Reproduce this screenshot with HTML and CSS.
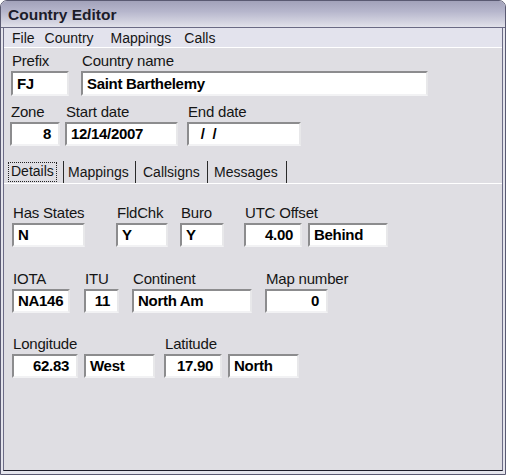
FILE: index.html
```html
<!DOCTYPE html>
<html lang="en">
<head>
<meta charset="utf-8">
<title>Country Editor</title>
<link rel="stylesheet" href="styles.css">
</head>
<body>
<div class="window">
  <div class="titlebar">Country Editor</div>
  <div class="frame">
    <div class="client">
      <div class="menubar">
        <span class="menu m-file">File</span>
        <span class="menu m-country">Country</span>
        <span class="menu m-mappings">Mappings</span>
        <span class="menu m-calls">Calls</span>
      </div>

      <div class="header">
        <div class="row row-1">
          <div class="field f-prefix"><label>Prefix</label><div class="box">FJ</div></div>
          <div class="field f-name"><label>Country name</label><div class="box">Saint Barthelemy</div></div>
        </div>
        <div class="row row-2">
          <div class="field f-zone"><label>Zone</label><div class="box num">8</div></div>
          <div class="field f-start"><label>Start date</label><div class="box">12/14/2007</div></div>
          <div class="field f-end"><label>End date</label><div class="box date-empty">&nbsp;/&nbsp;&nbsp;/</div></div>
        </div>
      </div>

      <div class="tabs">
        <span class="tab t-details active"><span class="focus">Details</span></span>
        <span class="tab t-mappings">Mappings</span>
        <span class="tab t-callsigns">Callsigns</span>
        <span class="tab t-messages">Messages</span>
      </div>

      <div class="page">
        <div class="row row-3">
          <div class="field f-states"><label>Has States</label><div class="box">N</div></div>
          <div class="field f-fldchk"><label>FldChk</label><div class="box">Y</div></div>
          <div class="field f-buro"><label>Buro</label><div class="box">Y</div></div>
          <div class="field f-utc">
            <label>UTC Offset</label>
            <div class="pair">
              <div class="box num b-utc">4.00</div>
              <div class="box b-behind">Behind</div>
            </div>
          </div>
        </div>
        <div class="row row-4">
          <div class="field f-iota"><label>IOTA</label><div class="box">NA146</div></div>
          <div class="field f-itu"><label>ITU</label><div class="box num">11</div></div>
          <div class="field f-cont"><label>Continent</label><div class="box">North Am</div></div>
          <div class="field f-map"><label>Map number</label><div class="box num">0</div></div>
        </div>
        <div class="row row-5">
          <div class="field f-long">
            <label>Longitude</label>
            <div class="pair">
              <div class="box num b-lon">62.83</div>
              <div class="box b-dir">West</div>
            </div>
          </div>
          <div class="field f-lat">
            <label>Latitude</label>
            <div class="pair">
              <div class="box num b-lat">17.90</div>
              <div class="box b-dir">North</div>
            </div>
          </div>
        </div>
      </div>
    </div>
  </div>
</div>
</body>
</html>
```

FILE: styles.css
```css
* { box-sizing: border-box; }

html, body {
  margin: 0;
  padding: 0;
  background: #ffffff;
}

body {
  font-family: "Liberation Sans", Arial, sans-serif;
  font-size: 14px;
  color: #111;
}

/* window chrome */
.window {
  width: 506px;
  height: 475px;
  display: flex;
  flex-direction: column;
  border: 1px solid #5a5a72;
  border-radius: 7px 7px 0 0;
  background: #e4e4ec;
  overflow: hidden;
}

.titlebar {
  height: 27px;
  flex: none;
  padding-left: 7px;
  line-height: 28px;
  font-weight: bold;
  font-size: 15.5px;
  color: #1c1c2a;
  background: linear-gradient(#a2a2ba 0%, #b6b6cc 40%, #d6d6e2 85%, #e2e2ea 100%);
  border-bottom: 1px solid #6a6a84;
}

.frame {
  flex: 1;
  display: flex;
  padding: 0 2px 3px 2px;
}

.client {
  flex: 1;
  display: flex;
  flex-direction: column;
  background: #dfdee3;
  border-left: 1px solid #6c6c86;
  border-right: 1px solid #6c6c86;
  border-bottom: 1px solid #1c1c28;
}

/* menu */
.menubar {
  height: 20px;
  flex: none;
  display: flex;
  align-items: center;
  background: #e3e3ed;
  border-bottom: 1px solid #ffffff;
  font-size: 14px;
  color: #151515;
}

.menu { white-space: nowrap; }
.m-file { margin-left: 8px; }
.m-country { margin-left: 10px; }
.m-mappings { margin-left: 17px; }
.m-calls { margin-left: 13px; }

/* fields */
.header { padding: 5px 0 0 0; }

.row {
  display: flex;
  align-items: flex-start;
}

.field {
  display: flex;
  flex-direction: column;
}

.field label {
  height: 16px;
  line-height: 16px;
  margin-bottom: 2px;
  padding-left: 1px;
  font-size: 15px;
  letter-spacing: -0.2px;
  white-space: nowrap;
  color: #151515;
}

.box {
  height: 24px;
  line-height: 20px;
  padding: 0 4px;
  background: #ffffff;
  border: 2px solid;
  border-color: #8c8c8e #e8e8ea #f2f2f4 #8c8c8e;
  font-weight: bold;
  font-size: 15px;
  letter-spacing: -0.3px;
  color: #000;
  white-space: nowrap;
  overflow: hidden;
}

.box.num { text-align: right; padding-right: 7px; }

.pair { display: flex; gap: 6px; }

/* row 1 */
.row-1 { height: 44px; }
.row-1 .box { height: 25px; line-height: 21px; }
.f-prefix { margin-left: 7px; width: 58px; }
.f-name { margin-left: 12px; width: 347px; }

/* row 2 */
.row-2 { margin-top: 7px; }
.f-zone { margin-left: 6px; width: 50px; }
.f-start { margin-left: 5px; width: 113px; }
.f-end { margin-left: 9px; width: 114px; }
.date-empty { padding-left: 8px; }

/* tabs */
.tabs {
  flex: none;
  display: flex;
  align-items: stretch;
  height: 23px;
  margin-top: 15px;
  border-bottom: 1px solid #ffffff;
}

.tab {
  display: flex;
  align-items: center;
  padding-left: 4px;
  border-right: 1px solid #2a2a2a;
  color: #151515;
  white-space: nowrap;
}

.t-details { margin-left: 2px; width: 58px; padding-left: 2px; }
.t-mappings { width: 72px; padding-left: 4px; }
.t-callsigns { width: 72px; padding-left: 7px; }
.t-messages { width: 79px; padding-left: 6px; }

.focus {
  padding: 1px 2px 2px 2px;
  border: 1px dotted #222;
  line-height: 15px;
}

/* details page */
.page { padding-top: 21px; }

.f-states { margin-left: 8px; width: 73px; }
.f-fldchk { margin-left: 31px; width: 52px; }
.f-buro { margin-left: 12px; width: 44px; }
.f-utc { margin-left: 20px; }
.b-utc { width: 58px; }
.b-behind { width: 80px; }

.row-4 { margin-top: 24px; }
.f-iota { margin-left: 8px; width: 58px; }
.f-itu { margin-left: 14px; width: 35px; }
.f-cont { margin-left: 13px; width: 120px; }
.f-map { margin-left: 13px; width: 63px; }

.row-5 { margin-top: 23px; }
.f-long { margin-left: 8px; }
.b-lon { width: 66px; }
.b-dir { width: 71px; }
.f-lat { margin-left: 9px; }
.b-lat { width: 58px; }
```
